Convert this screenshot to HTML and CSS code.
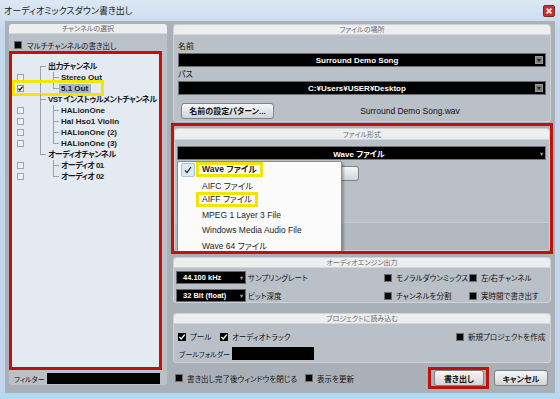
FILE: index.html
```html
<!DOCTYPE html>
<html lang="ja">
<head>
    <meta charset="UTF-8">
    <title>オーディオミックスダウン書き出し</title>
    <link rel="stylesheet" href="styles.css">
</head>
<body>
<div class="window">
    <div class="titlebar">
        <span class="title">オーディオミックスダウン書き出し</span>
        <svg class="close" width="12" height="12" viewBox="0 0 12 12"><rect x="0.5" y="0.5" width="11" height="11" rx="1.5" fill="#c9322b" stroke="#7a2d1e"/><path d="M3.6 3.6 L8.4 8.4 M8.4 3.6 L3.6 8.4" stroke="#fff" stroke-width="1.6"/></svg>
    </div>

    <div class="client">
        <!-- チャンネルの選択 -->
        <div class="channels">
            <div class="group-head">チャンネルの選択</div>
            <div class="opt multi"><span class="cb"></span>マルチチャンネルの書き出し</div>
            <div class="tree">
                <div class="row"><span class="cell"></span><span class="g start"></span><span class="label jp">出力チャンネル</span></div>
                <div class="row"><span class="cell"><span class="tcb"></span></span><span class="g wide pipe"></span><span class="g tee"></span><span class="label">Stereo Out</span></div>
                <div class="row">
                    <span class="cell"><svg class="tcb-on" width="7" height="7" viewBox="0 0 7 7"><rect x="0.5" y="0.5" width="6" height="6" fill="#fff" stroke="#8d959d"/><path d="M1.5 3.6 L2.9 5.1 L5.6 1.7" stroke="#000" stroke-width="1.3" fill="none"/></svg></span>
                    <span class="g wide pipe"></span><span class="g elbow"></span><span class="label sel">5.1 Out</span>
                    <span class="yellow-box"></span>
                </div>
                <div class="row"><span class="cell"></span><span class="g tee"></span><span class="label jp">VST インストゥルメントチャンネル</span></div>
                <div class="row"><span class="cell"><span class="tcb"></span></span><span class="g wide pipe"></span><span class="g tee"></span><span class="label">HALionOne</span></div>
                <div class="row"><span class="cell"><span class="tcb"></span></span><span class="g wide pipe"></span><span class="g tee"></span><span class="label">Hal Hso1 Violin</span></div>
                <div class="row"><span class="cell"><span class="tcb"></span></span><span class="g wide pipe"></span><span class="g tee"></span><span class="label">HALionOne (2)</span></div>
                <div class="row"><span class="cell"><span class="tcb"></span></span><span class="g wide pipe"></span><span class="g elbow"></span><span class="label">HALionOne (3)</span></div>
                <div class="row"><span class="cell"></span><span class="g elbow"></span><span class="label jp">オーディオチャンネル</span></div>
                <div class="row"><span class="cell"><span class="tcb"></span></span><span class="g wide"></span><span class="g tee"></span><span class="label jp">オーディオ 01</span></div>
                <div class="row"><span class="cell"><span class="tcb"></span></span><span class="g wide"></span><span class="g elbow"></span><span class="label jp">オーディオ 02</span></div>
            </div>
            <div class="filter"><span class="filter-label">フィルター</span><span class="filter-field"></span></div>
        </div>

        <div class="right">
            <!-- ファイルの場所 -->
            <div class="group loc">
                <div class="group-head">ファイルの場所</div>
                <div class="loc-body">
                    <div class="lbl">名前</div>
                    <div class="field"><span class="txt">Surround Demo Song</span><span class="arrow-box"></span></div>
                    <div class="lbl second">パス</div>
                    <div class="field"><span class="txt">C:¥Users¥USER¥Desktop</span><span class="arrow-box"></span></div>
                    <div class="btn-row">
                        <span class="btn pattern-btn">名前の設定パターン...</span>
                        <span class="filename">Surround Demo Song.wav</span>
                    </div>
                </div>
            </div>

            <!-- ファイル形式 -->
            <div class="fmt-wrap">
                <div class="group fmt">
                    <div class="group-head">ファイル形式</div>
                    <div class="select"><span class="txt">Wave ファイル</span><span class="caret">▾</span></div>
                    <div class="fmt-body"><span class="btn ghost-btn"></span></div>
                    <div class="fmt-foot"></div>
                </div>
                <div class="menu">
                    <div class="menu-item">
                        <span class="menu-check"><svg width="8" height="8" viewBox="0 0 8 8"><path d="M1 4.3 L3 6.6 L7 1" stroke="#1a1a1a" stroke-width="1.2" fill="none"/></svg></span>
                        <span class="yel bold">Wave ファイル</span>
                    </div>
                    <div class="menu-item"><span class="menu-check off"></span>AIFC ファイル</div>
                    <div class="menu-item"><span class="menu-check off"></span><span class="yel">AIFF ファイル</span></div>
                    <div class="menu-item"><span class="menu-check off"></span>MPEG 1 Layer 3 File</div>
                    <div class="menu-item"><span class="menu-check off"></span>Windows Media Audio File</div>
                    <div class="menu-item"><span class="menu-check off"></span>Wave 64 ファイル</div>
                </div>
            </div>

            <!-- オーディオエンジン出力 -->
            <div class="group engine">
                <div class="group-head">オーディオエンジン出力</div>
                <div class="engine-grid">
                    <div class="cell-row"><span class="dd">44.100 kHz<span class="caret">▾</span></span>サンプリングレート</div>
                    <div class="opt"><span class="cb"></span>モノラルダウンミックス</div>
                    <div class="opt"><span class="cb"></span>左/右チャンネル</div>
                    <div class="cell-row"><span class="dd">32 Bit (float)<span class="caret">▾</span></span>ビット深度</div>
                    <div class="opt"><span class="cb"></span>チャンネルを分割</div>
                    <div class="opt"><span class="cb"></span>実時間で書き出す</div>
                </div>
            </div>

            <!-- プロジェクトに読み込む -->
            <div class="group project">
                <div class="group-head">プロジェクトに読み込む</div>
                <div class="proj-row">
                    <div class="opt"><svg class="cb-on" width="8" height="8" viewBox="0 0 8 8"><rect width="8" height="8" fill="#000"/><path d="M1.4 4 L3.2 6 L6.8 1.6" stroke="#fff" stroke-width="1.4" fill="none"/></svg>プール</div>
                    <div class="opt"><svg class="cb-on" width="8" height="8" viewBox="0 0 8 8"><rect width="8" height="8" fill="#000"/><path d="M1.4 4 L3.2 6 L6.8 1.6" stroke="#fff" stroke-width="1.4" fill="none"/></svg>オーディオトラック</div>
                    <div class="opt"><span class="cb"></span>新規プロジェクトを作成</div>
                </div>
                <div class="pool-row"><span class="pool-label">プールフォルダー</span><span class="pool-field"></span></div>
            </div>

            <div class="bottom-row">
                <div class="opt close-opt"><span class="cb"></span>書き出し完了後ウィンドウを閉じる</div>
                <div class="opt"><span class="cb"></span>表示を更新</div>
                <div class="export-wrap"><span class="btn export">書き出し</span></div>
                <span class="btn cancel">キャンセル</span>
            </div>
        </div>
    </div>
</div>
</body>
</html>
```

FILE: styles.css
```css
* {
    margin: 0;
    padding: 0;
    box-sizing: border-box;
}

body {
    width: 560px;
    height: 399px;
    overflow: hidden;
    font-family: "Liberation Sans", "Noto Sans CJK JP", sans-serif;
    font-feature-settings: "palt";
    color: #111;
}

.window {
    height: 399px;
    display: flex;
    flex-direction: column;
    padding: 0 5px;
    background: linear-gradient(#dce8f4, #c6d8ec 30px, #c0d5ec);
    border-bottom: 6px solid #b2dbf3;
}

.titlebar {
    height: 21px;
    display: flex;
    align-items: center;
    justify-content: space-between;
}

.title {
    font-size: 9px;
    color: #1b1b1b;
    margin-left: -1px;
}

.client {
    flex: 1;
    display: flex;
    gap: 6px;
    padding: 3px 4px 0;
    background: #a9b0b8;
}

/* 共通 */
.group-head {
    height: 10px;
    line-height: 10px;
    background: #eceef0;
    border-bottom: 1px solid #d3d7db;
    border-radius: 3px 3px 0 0;
    font-size: 7px;
    color: #6c6c6c;
    text-align: center;
}

.group {
    background: #bac0c7;
    border: 1px solid #cdd2d7;
    border-radius: 3px;
}

.cb {
    width: 8px;
    height: 8px;
    flex: none;
    background: #050505;
    border: 1px solid #6e6e6e;
}

.cb-on {
    flex: none;
    display: block;
}

.opt {
    display: flex;
    align-items: center;
    gap: 4px;
    font-size: 7.5px;
    white-space: nowrap;
}

.btn {
    height: 16px;
    display: flex;
    align-items: center;
    justify-content: center;
    border: 1px solid #7d8389;
    border-radius: 3px;
    background: linear-gradient(#f5f6f7, #d2d5d8);
    font-size: 8px;
    font-weight: bold;
    white-space: nowrap;
}

.caret {
    font-size: 6px;
    color: #9a9a9a;
    margin-left: auto;
    margin-right: 2px;
}

/* チャンネルの選択 */
.channels {
    width: 158px;
    height: 361px;
    display: flex;
    flex-direction: column;
    background: #bbc1c8;
    border-radius: 3px;
}

.multi {
    height: 10px;
    margin: 6px 0 1px 5px;
    gap: 5px;
}

.tree {
    height: 319px;
    margin-right: 5px;
    padding-top: 7px;
    border: 3px solid #c0120c;
    background: #e4eaf1;
}

.row {
    position: relative;
    display: flex;
    align-items: center;
    height: 11px;
}

.row .cell {
    width: 28px;
    height: 11px;
    flex: none;
    display: flex;
    align-items: center;
    padding-left: 5px;
}

.tcb {
    width: 7px;
    height: 7px;
    border: 1px solid #9ea6ae;
    background: #edf1f6;
}

.tcb-on {
    display: block;
}

.g {
    width: 8px;
    height: 11px;
    flex: none;
    background-repeat: no-repeat;
}

.g.wide {
    width: 13px;
}

.g.start {
    background-image: linear-gradient(#9aa1a8, #9aa1a8), linear-gradient(#9aa1a8, #9aa1a8);
    background-position: 0 5px, 0 5px;
    background-size: 1px 6px, 6px 1px;
}

.g.tee {
    background-image: linear-gradient(#9aa1a8, #9aa1a8), linear-gradient(#9aa1a8, #9aa1a8);
    background-position: 0 0, 0 5px;
    background-size: 1px 11px, 6px 1px;
}

.g.elbow {
    background-image: linear-gradient(#9aa1a8, #9aa1a8), linear-gradient(#9aa1a8, #9aa1a8);
    background-position: 0 0, 0 5px;
    background-size: 1px 6px, 6px 1px;
}

.g.pipe {
    background-image: linear-gradient(#9aa1a8, #9aa1a8);
    background-position: 0 0;
    background-size: 1px 11px;
}

.label {
    font-size: 8px;
    font-weight: bold;
    white-space: nowrap;
    line-height: 10px;
    color: #1a1a1a;
}

.label.jp {
    letter-spacing: -0.6px;
}

.label.sel {
    background: #a3b7d3;
    margin-left: -2px;
    padding: 0 3px 0 2px;
}

.yellow-box {
    position: absolute;
    left: 0;
    top: -3px;
    width: 92px;
    height: 16px;
    border: 3px solid #f3e500;
}

.filter {
    display: flex;
    align-items: center;
    height: 11px;
    margin: 3px 0 0 5px;
    font-size: 7px;
}

.filter-label {
    width: 33px;
}

.filter-field {
    width: 113px;
    height: 11px;
    background: #000;
}

/* 右側 */
.right {
    width: 378px;
    display: flex;
    flex-direction: column;
}

.loc-body {
    padding: 0 4px 2px;
}

.lbl {
    height: 10px;
    line-height: 10px;
    margin-top: 7px;
    font-size: 8px;
}

.lbl.second {
    margin-top: 3px;
}

.field {
    height: 14px;
    margin-top: 1px;
    display: flex;
    align-items: center;
    background: #000;
    border: 1px solid #6d6d6d;
    color: #fff;
    font-size: 8px;
    font-weight: bold;
}

.field .txt {
    flex: 1;
    text-align: center;
}

.arrow-box {
    width: 8px;
    height: 8px;
    margin-right: 2px;
    background: #7c7c7c;
    border: 1px solid #9a9a9a;
    display: flex;
    justify-content: center;
    padding-top: 2px;
}

.arrow-box::after {
    content: "";
    border-left: 2.5px solid transparent;
    border-right: 2.5px solid transparent;
    border-top: 3px solid #222;
    height: 0;
}

.btn-row {
    display: flex;
    align-items: center;
    height: 17px;
    margin-top: 7px;
}

.pattern-btn {
    width: 93px;
    margin-left: 3px;
}

.filename {
    flex: 1;
    text-align: center;
    font-size: 8.5px;
}

/* ファイル形式 */
.fmt-wrap {
    position: relative;
    overflow: hidden;
    margin: 1px -2px 0;
    padding-top: 2px;
    border: 3px solid #c0120c;
    background: #a9b0b8;
}

.fmt {
    height: 123px;
    display: flex;
    flex-direction: column;
}

.fmt .group-head {
    height: 11px;
    line-height: 11px;
}

.select {
    height: 14px;
    margin: 6px 3px 0 2px;
    display: flex;
    align-items: center;
    background: #000;
    border: 1px solid #777;
    color: #fff;
    font-size: 8px;
    font-weight: bold;
}

.select .txt {
    flex: 1;
    text-align: center;
}

.select .caret {
    flex: none;
}

.fmt-body {
    flex: 1;
    padding-top: 6px;
}

.ghost-btn {
    width: 59px;
    height: 15px;
    margin-left: 125px;
}

.fmt-foot {
    height: 28px;
    border-top: 1px solid #c6cbd0;
    background: #b3b9c0;
}

.menu {
    position: absolute;
    left: 3px;
    top: 35px;
    width: 165px;
    background: #fbfbfb;
    border: 1px solid #8d8d8d;
    box-shadow: 2px 2px 2px rgba(0, 0, 0, 0.25);
}

.menu-item {
    height: 15px;
    display: flex;
    align-items: center;
    padding-left: 3px;
    font-size: 8.5px;
    color: #1d1d1d;
    white-space: nowrap;
}

.menu-check {
    width: 14px;
    height: 14px;
    margin-right: 7px;
    display: flex;
    align-items: center;
    justify-content: center;
    background: #dce8f6;
    border: 1px solid #a9c3e3;
    border-radius: 2px;
}

.menu-check.off {
    visibility: hidden;
}

.yel {
    display: inline-block;
    height: 15px;
    line-height: 9px;
    margin-left: -6px;
    padding: 0 3px;
    border: 3px solid #f3e500;
}

.bold {
    font-weight: bold;
}

/* オーディオエンジン出力 */
.engine {
    margin-top: 3px;
}

.engine-grid {
    display: grid;
    grid-template-columns: 208px 85px 1fr;
    grid-template-rows: 13px 13px;
    row-gap: 5px;
    margin: 3px 0 0 2px;
}

.cell-row {
    display: flex;
    align-items: center;
    gap: 2px;
    font-size: 7.5px;
}

.dd {
    width: 70px;
    height: 13px;
    display: flex;
    align-items: center;
    padding-left: 6px;
    background: #000;
    border: 1px solid #6a6a6a;
    color: #fff;
    font-size: 7.5px;
    font-weight: bold;
    white-space: nowrap;
}

/* プロジェクトに読み込む */
.project {
    margin-top: 10px;
    padding-bottom: 2px;
}

.proj-row {
    display: grid;
    grid-template-columns: 42px 236px auto;
    align-items: center;
    height: 11px;
    margin: 7px 0 0 4px;
}

.pool-row {
    display: flex;
    align-items: center;
    height: 13px;
    margin: 5px 0 0 5px;
    font-size: 7px;
    white-space: nowrap;
}

.pool-label {
    width: 53px;
}

.pool-field {
    width: 82px;
    height: 13px;
    background: #000;
}

/* 下部 */
.bottom-row {
    display: flex;
    align-items: center;
    height: 22px;
    margin-top: 4px;
    padding: 0 3px 0 2px;
}

.bottom-row .opt {
    font-size: 7.5px;
}

.close-opt {
    width: 130px;
}

.export-wrap {
    margin-left: auto;
    height: 22px;
    display: flex;
    align-items: center;
    padding: 0 2px 0 3px;
    border: 3px solid #c0120c;
}

.export {
    width: 50px;
}

.cancel {
    width: 54px;
    margin-left: 5px;
}
```
